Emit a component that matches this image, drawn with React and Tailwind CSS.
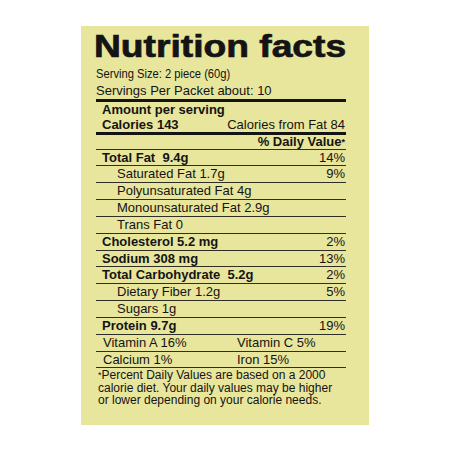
import React from 'react'

const rows = [
  { label: 'Total Fat  9.4g', dv: '14%', bold: true },
  { label: 'Saturated Fat 1.7g', dv: '9%' },
  { label: 'Polyunsaturated Fat 4g' },
  { label: 'Monounsaturated Fat 2.9g' },
  { label: 'Trans Fat 0' },
  { label: 'Cholesterol 5.2 mg', dv: '2%', bold: true },
  { label: 'Sodium 308 mg', dv: '13%', bold: true },
  { label: 'Total Carbohydrate  5.2g', dv: '2%', bold: true },
  { label: 'Dietary Fiber 1.2g', dv: '5%' },
  { label: 'Sugars 1g' },
  { label: 'Protein 9.7g', dv: '19%', bold: true },
]

const vitamins = [
  ['Vitamin A 16%', 'Vitamin C 5%'],
  ['Calcium 1%', 'Iron 15%'],
]

export default function App() {
  return (
    <div className="flex h-[450px] w-[450px] items-center justify-center bg-white">
      <div className="h-[399px] w-[288px] bg-[#e8e59c] pl-[15px] pr-[23px] pt-[4px] text-[#141414] font-['Liberation_Sans',Arial,sans-serif]">
        <div className="-ml-[2px] h-[34px] origin-left scale-x-[1.2] whitespace-nowrap text-[31px] font-bold leading-[34px] [-webkit-text-stroke:0.7px_#141414]">
          Nutrition facts
        </div>
        <div className="mt-[1px] border-b-[3px] border-[#141414] text-[13px] leading-[17px]">
          <div className="origin-left scale-x-[0.86] whitespace-nowrap">Serving Size: 2 piece (60g)</div>
          <div>Servings Per Packet about: 10</div>
        </div>
        <div className="h-[15px] pl-[6px] text-[13px] font-bold leading-[15px]">Amount per serving</div>
        <div className="flex h-[18px] items-start justify-between border-b-[3px] border-[#141414] pl-[6px] pr-[1px] text-[13px] leading-[15px]">
          <span className="font-bold">Calories 143</span>
          <span>Calories from Fat 84</span>
        </div>
        <div className="h-[15px] border-b border-[#2f2f24] pr-[1px] text-right text-[13px] font-bold leading-[14px]">
          % Daily Value<span className="align-top text-[9px]">*</span>
        </div>
        {rows.map((r) => (
          <div
            key={r.label}
            className={`flex h-[16.85px] items-start justify-between border-b border-[#2f2f24] pr-[1px] text-[13px] leading-[15.85px] ${r.bold ? 'pl-[6px]' : 'pl-[21px]'}`}
          >
            <span className={`whitespace-pre ${r.bold ? 'font-bold' : ''}`}>{r.label}</span>
            {r.dv && <span>{r.dv}</span>}
          </div>
        ))}
        {vitamins.map((v) => (
          <div key={v[0]} className="flex h-[16.85px] border-b border-[#2f2f24] text-[13px] leading-[15.85px]">
            <span className="w-[141px] pl-[7px]">{v[0]}</span>
            <span>{v[1]}</span>
          </div>
        ))}
        <p className="mt-[1px] whitespace-nowrap pl-[2px] text-[12px] leading-[12.5px]">
          <span className="align-top text-[9px]">*</span>Percent Daily Values are based on a 2000
          <br />
          calorie diet. Your daily values may be higher
          <br />
          or lower depending on your calorie needs.
        </p>
      </div>
    </div>
  )
}
